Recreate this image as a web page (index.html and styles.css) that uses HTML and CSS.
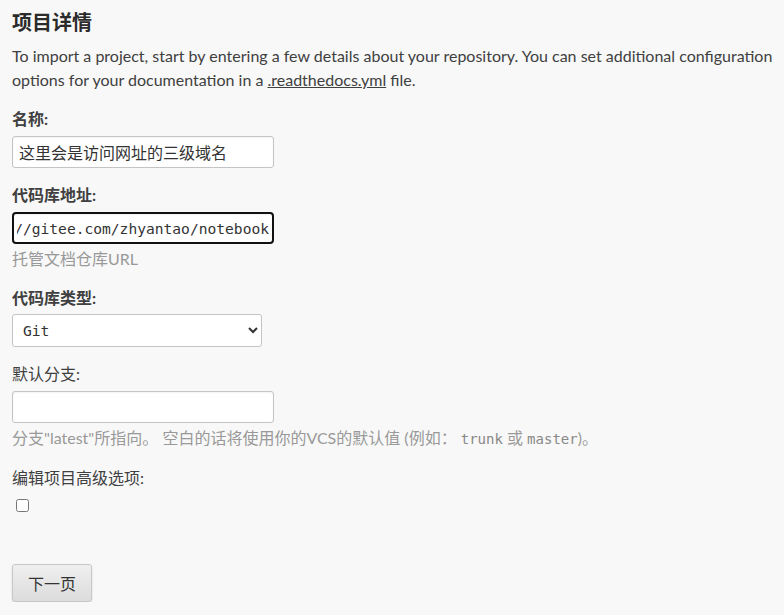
FILE: index.html
```html
<!DOCTYPE html>
<html lang="zh-CN">
<head>
    <meta charset="UTF-8">
    <meta name="viewport" content="width=device-width, initial-scale=1.0">
    <title>项目详情</title>
    <link rel="stylesheet" href="styles.css">
</head>
<body>

    <h1>项目详情</h1>

    <p class="intro">To import a project, start by entering a few details about your repository. You can set additional configuration options for your documentation in a <a href="#">.readthedocs.yml</a> file.</p>

    <form class="project-form">
        <!-- Name -->
        <div class="field">
            <label class="required" for="id_name">名称:</label>
            <input type="text" id="id_name" class="text-input" value="这里会是访问网址的三级域名">
        </div>

        <!-- Repository URL -->
        <div class="field">
            <label class="required" for="id_repo">代码库地址:</label>
            <input type="text" id="id_repo" class="text-input mono focused" value="https://gitee.com/zhyantao/notebook">
            <span class="helptext">托管文档仓库URL</span>
        </div>

        <!-- Repository type -->
        <div class="field">
            <label class="required" for="id_repo_type">代码库类型:</label>
            <select id="id_repo_type" class="select-input mono">
                <option selected>Git</option>
                <option>Subversion</option>
                <option>Mercurial</option>
                <option>Bazaar</option>
            </select>
        </div>

        <!-- Default branch -->
        <div class="field">
            <label for="id_branch">默认分支:</label>
            <input type="text" id="id_branch" class="text-input">
            <span class="helptext">分支"latest"所指向。 空白的话将使用你的VCS的默认值 (例如： <code>trunk</code> 或 <code>master</code>)。</span>
        </div>

        <!-- Advanced -->
        <div class="field">
            <label for="id_advanced">编辑项目高级选项:</label>
            <input type="checkbox" id="id_advanced" class="checkbox">
        </div>

        <div class="actions">
            <button type="button" class="btn">下一页</button>
        </div>
    </form>

</body>
</html>
```

FILE: styles.css
```css
body {
    margin: 0;
    padding: 12px 4px 0 12px;
    background: #f8f8f8;
    color: #404040;
    font-family: Lato, "Noto Sans CJK SC", sans-serif;
    font-size: 16px;
    line-height: 24px;
}

h1 {
    margin: 0 0 12px 0;
    font-size: 20px;
    line-height: 20px;
    font-weight: 700;
    color: #2b2b2b;
}

.intro {
    margin: 0 0 15px 0;
}

.intro a {
    color: #404040;
    text-decoration: underline;
}

/* Form fields */
.field {
    display: flex;
    flex-direction: column;
    align-items: flex-start;
    margin-bottom: 15px;
}

.field label {
    line-height: 24px;
    margin-bottom: 5px;
}

.field label.required {
    font-weight: 700;
}

.text-input {
    box-sizing: border-box;
    width: 262px;
    height: 32px;
    margin: 0;
    padding: 3px 6px;
    border: 1px solid #c4c4c4;
    border-radius: 3px;
    background: #fff;
    color: #333;
    font-family: Lato, "Noto Sans CJK SC", sans-serif;
    font-size: 16px;
    box-shadow: inset 0 1px 2px rgba(0, 0, 0, 0.05);
}

.mono {
    font-family: "DejaVu Sans Mono", "Liberation Mono", monospace;
    font-size: 14.6px;
}

/* the url field has keyboard focus in the screenshot */
.text-input.focused {
    border: 2px solid #111;
    border-radius: 4px;
    padding: 3px 3px;
    direction: rtl;
}

.select-input {
    box-sizing: border-box;
    width: 250px;
    height: 33px;
    margin: -1px 0 0 0;
    padding: 3px 6px;
    border: 1px solid #c4c4c4;
    border-radius: 3px;
    background: #fff;
    color: #333;
}

.helptext {
    margin-top: 3px;
    color: #999;
    line-height: 24px;
}

.helptext code {
    font-family: "DejaVu Sans Mono", "Liberation Mono", monospace;
    font-size: 14px;
    color: #888;
}

.checkbox {
    margin: 4px 4px 0 4px;
    width: 13px;
    height: 13px;
}

/* Submit */
.actions {
    padding-top: 37px;
}

.btn {
    box-sizing: border-box;
    width: 80px;
    height: 38px;
    border: 1px solid #c8c8c8;
    border-radius: 3px;
    background: linear-gradient(#efefef, #dcdcdc);
    color: #333;
    font-family: Lato, "Noto Sans CJK SC", sans-serif;
    font-size: 16px;
    box-shadow: 0 1px 2px rgba(0, 0, 0, 0.15);
    cursor: pointer;
}
```
